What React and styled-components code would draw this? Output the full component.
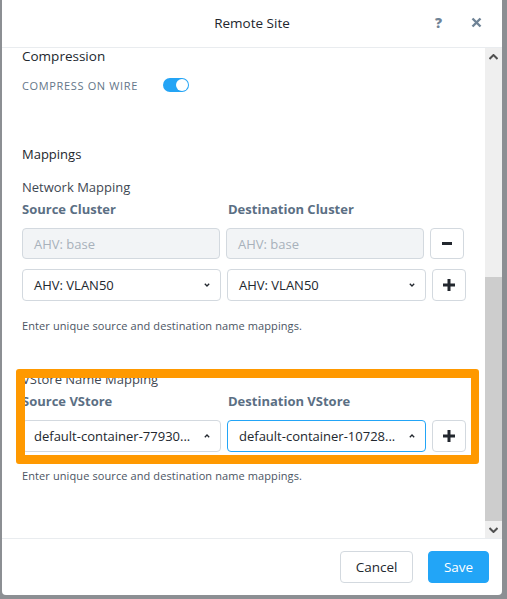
import React from 'react'
import styled, { createGlobalStyle } from 'styled-components'

const GlobalStyle = createGlobalStyle`
  html, body {
    margin: 0;
    padding: 0;
    background: #8c8f93;
  }
  body {
    font-family: "Open Sans", Lato, sans-serif;
    color: #22272e;
  }
`;

const Page = styled.div`
  position: relative;
  width: 507px;
  height: 599px;
  padding-left: 2px;
  box-sizing: border-box;
  background: #8c8f93;
  overflow: hidden;
`;

const Modal = styled.div`
  width: 500px;
  height: 595px;
  background: #fff;
  border-radius: 0 0 4px 4px;
  display: flex;
  flex-direction: column;
`;

const Header = styled.div`
  height: 48px;
  box-sizing: border-box;
  padding-bottom: 2px;
  flex: none;
  display: grid;
  grid-template-columns: 1fr auto 1fr;
  align-items: center;
  border-bottom: 1px solid #e9ecef;
`;

const Title = styled.div`
  grid-column: 2;
  font-size: 13.5px;
  color: #22272e;
`;

const HeaderTools = styled.div`
  grid-column: 3;
  justify-self: end;
  display: flex;
  align-items: center;
  gap: 29px;
  padding-right: 20px;
`;

const HelpIcon = styled.span`
  font-size: 14px;
  font-weight: 800;
  color: #6f8396;
  line-height: 14px;
`;

const Body = styled.div`
  height: 490px;
  display: flex;
  flex: none;
`;

const Content = styled.div`
  flex: 1;
  padding: 0 20px;
  overflow: hidden;
`;

const Heading = styled.div`
  color: ${p => p.$muted ? '#3f4853' : '#22272e'};
  font-size: ${p => p.$size || 13.5}px;
  line-height: 16px;
  margin-top: ${p => p.$mt || 0}px;
`;

const ToggleRow = styled.div`
  display: flex;
  align-items: center;
  height: 14px;
  margin-top: 14px;
`;

const ToggleLabel = styled.span`
  width: 141px;
  font-size: 11px;
  letter-spacing: 0.65px;
  color: #647689;
`;

const Toggle = styled.span`
  position: relative;
  width: 26px;
  height: 14px;
  border-radius: 7px;
  background: #24a4f5;
  &::after {
    content: '';
    position: absolute;
    right: 1px;
    top: 1px;
    width: 12px;
    height: 12px;
    border-radius: 50%;
    background: #fff;
  }
`;

const ColHeaders = styled.div`
  display: grid;
  grid-template-columns: 199px 199px;
  column-gap: 7px;
  margin-top: 6px;
  font-size: 13px;
  line-height: 16px;
  font-weight: 700;
  color: #5b6f84;
`;

const Row = styled.div`
  display: grid;
  grid-template-columns: ${p => p.$wide ? '199px 199px 34px' : '198px 198px 34px'};
  column-gap: 6px;
  height: ${p => p.$h || 32}px;
  margin-top: ${p => p.$mt || 0}px;
`;

const Field = styled.div`
  box-sizing: border-box;
  display: flex;
  align-items: center;
  justify-content: space-between;
  padding: 0 10px 0 11px;
  border: 1px solid ${p => p.$focus ? '#22a5f7' : '#d3d9df'};
  border-radius: 4px;
  background: ${p => p.$disabled ? '#f2f4f6' : '#fff'};
  color: ${p => p.$disabled ? '#a8b1bb' : '#22272e'};
  font-size: 13px;
  white-space: nowrap;
`;

const SquareButton = styled.div`
  box-sizing: border-box;
  display: flex;
  align-items: center;
  justify-content: center;
  border: 1px solid #d3d9df;
  border-radius: 4px;
  background: #fff;
`;

const Help = styled.div`
  font-size: 11px;
  letter-spacing: 0.1px;
  line-height: 14px;
  color: #4b5563;
  margin-top: ${p => p.$mt || 0}px;
`;

const ScrollBar = styled.div`
  width: 17px;
  flex: none;
  display: flex;
  flex-direction: column;
  background: #efefef;
`;

const ScrollArrow = styled.div`
  height: 17px;
  flex: none;
  display: flex;
  align-items: center;
  justify-content: center;
`;

const ScrollSpace = styled.div`
  height: ${p => p.$h}px;
  flex: none;
`;

const Thumb = styled.div`
  flex: 1;
  background: #cdcdcd;
`;

const Footer = styled.div`
  flex: 1;
  border-top: 1px solid #e9ecef;
  display: flex;
  justify-content: flex-end;
  align-items: flex-start;
  gap: 15px;
  padding: 12px 13px 0 0;
`;

const Button = styled.button`
  height: 32px;
  padding: 0;
  width: ${p => p.$w}px;
  border-radius: 4px;
  font-family: inherit;
  font-size: 13.5px;
  border: 1px solid ${p => p.$primary ? '#22a5f7' : '#d3d9df'};
  background: ${p => p.$primary ? '#22a5f7' : '#fff'};
  color: ${p => p.$primary ? '#fff' : '#22272e'};
`;

const Highlight = styled.div`
  position: absolute;
  left: 16px;
  top: 369px;
  width: 463px;
  height: 95px;
  box-sizing: border-box;
  border: 9px solid #ff9900;
  border-right-width: 8px;
  border-radius: 3px;
`;

const Chevron = ({ up }) => (
  <svg width="6" height="4" viewBox="0 0 6 4">
    <path d={up ? 'M0.8 3.3 L3 1 L5.2 3.3' : 'M0.8 0.7 L3 3 L5.2 0.7'} fill="none" stroke="#22272e" strokeWidth="1.3" />
  </svg>
);

const Plus = () => (
  <svg width="12" height="12" viewBox="0 0 12 12">
    <path d="M4.5 0h3v4.5H12v3H7.5V12h-3V7.5H0v-3h4.5z" fill="#22272e" />
  </svg>
);

const Minus = () => (
  <svg width="10" height="3" viewBox="0 0 10 3">
    <rect width="10" height="3" fill="#22272e" />
  </svg>
);

const CloseIcon = () => (
  <svg width="11" height="11" viewBox="0 0 11 11">
    <path d="M1.5 1.5 L9.5 9.5 M9.5 1.5 L1.5 9.5" stroke="#6f8396" strokeWidth="2.4" />
  </svg>
);

const ScrollChevron = ({ up }) => (
  <svg width="9" height="6" viewBox="0 0 9 6">
    <path d={up ? 'M0.5 5 L4.5 1 L8.5 5' : 'M0.5 1 L4.5 5 L8.5 1'} fill="none" stroke="#505050" strokeWidth="2" />
  </svg>
);

const App = () => {
  return (
    <Page>
      <GlobalStyle />
      <Modal>
        <Header>
          <Title>Remote Site</Title>
          <HeaderTools>
            <HelpIcon>?</HelpIcon>
            <CloseIcon />
          </HeaderTools>
        </Header>
        <Body>
          <Content>
            <Heading>Compression</Heading>
            <ToggleRow>
              <ToggleLabel>COMPRESS ON WIRE</ToggleLabel>
              <Toggle />
            </ToggleRow>

            <Heading $size={13} $mt={54}>Mappings</Heading>
            <Heading $size={13} $mt={17} $muted>Network Mapping</Heading>
            <ColHeaders>
              <span>Source Cluster</span>
              <span>Destination Cluster</span>
            </ColHeaders>
            <Row $h={31} $mt={11}>
              <Field $disabled>AHV: base</Field>
              <Field $disabled>AHV: base</Field>
              <SquareButton><Minus /></SquareButton>
            </Row>
            <Row $wide $mt={10}>
              <Field>AHV: VLAN50<Chevron /></Field>
              <Field>AHV: VLAN50<Chevron /></Field>
              <SquareButton><Plus /></SquareButton>
            </Row>
            <Help $mt={18}>Enter unique source and destination name mappings.</Help>

            <Heading $size={13} $mt={38} $muted>VStore Name Mapping</Heading>
            <ColHeaders>
              <span>Source VStore</span>
              <span>Destination VStore</span>
            </ColHeaders>
            <Row $wide $mt={11}>
              <Field>default-container-77930...<Chevron up /></Field>
              <Field $focus>default-container-10728...<Chevron up /></Field>
              <SquareButton><Plus /></SquareButton>
            </Row>
            <Help $mt={17}>Enter unique source and destination name mappings.</Help>
          </Content>
          <ScrollBar>
            <ScrollArrow><ScrollChevron up /></ScrollArrow>
            <ScrollSpace $h={212} />
            <Thumb />
            <ScrollArrow><ScrollChevron /></ScrollArrow>
          </ScrollBar>
        </Body>
        <Footer>
          <Button $w={73}>Cancel</Button>
          <Button $w={61} $primary>Save</Button>
        </Footer>
      </Modal>
      <Highlight />
    </Page>
  )
}

export default App
